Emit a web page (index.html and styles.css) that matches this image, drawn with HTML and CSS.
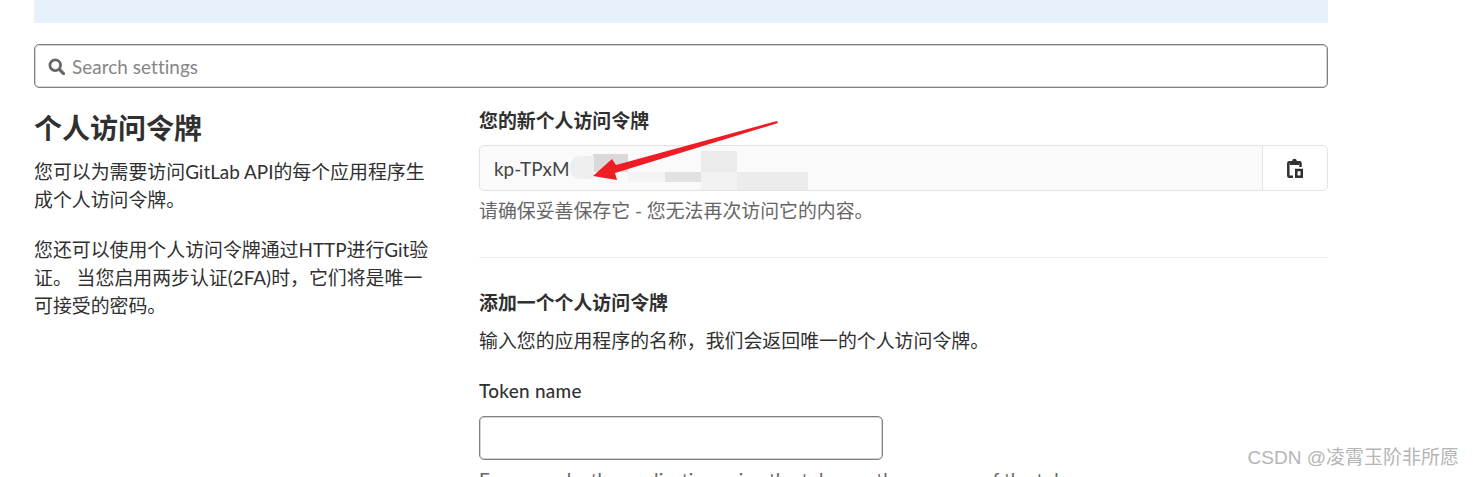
FILE: index.html
```html
<!DOCTYPE html>
<html lang="zh-CN">
<head>
<meta charset="utf-8">
<title>个人访问令牌</title>
<link rel="stylesheet" href="styles.css">
</head>
<body>
<div class="page">
  <div class="banner"></div>
  <div class="search">
    <svg class="search-icon" viewBox="0 0 16 16" width="17" height="17"><circle cx="6.800" cy="6.800" r="5" fill="none" stroke="#666" stroke-width="2.600"/><path d="M10.500 10.500 14.600 14.600" stroke="#666" stroke-width="3" stroke-linecap="round"/></svg>
    <span class="search-text">Search settings</span>
  </div>
  <div class="columns">
    <aside class="intro">
      <h1>个人访问令牌</h1>
      <p>您可以为需要访问GitLab API的每个应用程序生成个人访问令牌。</p>
      <p>您还可以使用个人访问令牌通过HTTP进行Git验证。 当您启用两步认证(2FA)时，它们将是唯一可接受的密码。</p>
    </aside>
    <main class="content">
      <h2>您的新个人访问令牌</h2>
      <div class="token">
        <div class="token-value">kp-TPxM
          <span class="blur b1"></span><span class="blur b2"></span><span class="blur b7"></span><span class="blur b3"></span><span class="blur b4"></span><span class="blur b5"></span><span class="blur b6"></span><span class="blur b8"></span>
        </div>
        <div class="copy">
          <svg viewBox="0 0 16 20" width="16" height="20"><path d="M3 4.200H2.300C1.700 4.200 1.300 4.600 1.300 5.200V17.700C1.300 18.300 1.700 18.700 2.300 18.700H6" fill="none" stroke="#303030" stroke-width="2.500"/><path d="M3 7V3H5.200C5.600 0 9.400 0 9.800 3H12V7Z" fill="#303030"/><path d="M12 4.200H12.500C13.100 4.200 13.500 4.600 13.500 5.200V9" fill="none" stroke="#303030" stroke-width="2.500"/><rect x="9.250" y="12" width="5.500" height="6.700" fill="none" stroke="#303030" stroke-width="2.500"/></svg>
        </div>
      </div>
      <p class="hint">请确保妥善保存它 - 您无法再次访问它的内容。</p>
      <hr>
      <h2>添加一个个人访问令牌</h2>
      <p class="desc">输入您的应用程序的名称，我们会返回唯一的个人访问令牌。</p>
      <label class="label">Token name</label>
      <div class="input"></div>
      <p class="help">For example, the application using the token or the purpose of the token.</p>
    </main>
  </div>
  <svg class="arrow" viewBox="0 0 192 65" width="192" height="65"><path d="M187 3 26 47 22 41 3 58 27 62 25 55 188 5Z" fill="#ee1c25"/></svg>
  <div class="watermark">CSDN @凌霄玉阶非所愿</div>
</div>
</body>
</html>
```

FILE: styles.css
```css
* { box-sizing: border-box; }
html, body { margin: 0; padding: 0; height: 477px; overflow: hidden; background: #fff; }
body { font-family: Lato, "Noto Sans CJK SC", sans-serif; font-size: 18.9px; line-height: 28px; color: #303030; }
.page { position: relative; height: 477px; overflow: hidden; padding: 0 146px 0 34px; }
.banner { height: 23px; background: #e6f1fb; }
.search { display: flex; align-items: center; height: 44px; margin-top: 21px; padding-left: 13px; border: 1px solid #808080; border-radius: 5px; box-shadow: inset 0 0 0 1px #d4d4d4; }
.search-icon { flex: none; margin-right: 7px; }
.search-text { padding-top: 2px; color: #868686; letter-spacing: .06px; }
.columns { display: flex; margin-top: 20px; }
.intro { width: 396px; margin-right: 49px; flex: none; }
.intro h1 { margin: 0 0 10px; font-size: 28px; line-height: 40px; font-weight: 700; }
.intro p { margin: 0 0 22px; }
.content { flex: 1; margin-top: -1px; }
.content h2 { margin: 0; font-size: 18.9px; line-height: 28px; font-weight: 700; }
.token { display: flex; height: 46px; margin-top: 10px; border: 1px solid #e3e3e3; border-radius: 5px; }
.token-value { position: relative; flex: 1; padding-left: 14px; line-height: 46px; background: #fafafa; border-right: 1px solid #e3e3e3; border-radius: 5px 0 0 5px; color: #444; }
.copy { display: flex; width: 64px; align-items: center; justify-content: center; }
.blur { position: absolute; background: #e4e4e4; }
.b1 { left: 113px; top: 8px; width: 35px; height: 18px; background: #d9d9d9; }
.b2 { left: 90px; top: 10px; width: 24px; height: 23px; background: #efefef; border-radius: 10px 0 0 10px; }
.b7 { left: 148px; top: 26px; width: 37px; height: 10px; background: #f4f4f4; }
.b3 { left: 185px; top: 26px; width: 36px; height: 10px; background: #e2e2e2; }
.b4 { left: 221px; top: 5px; width: 36px; height: 21px; background: #ebebeb; }
.b5 { left: 221px; top: 26px; width: 36px; height: 18px; background: #f2f2f2; }
.b6 { left: 257px; top: 26px; width: 35px; height: 18px; background: #ececec; }
.b8 { left: 292px; top: 26px; width: 36px; height: 18px; background: #ececec; }
.hint { margin: 6px 0 0; color: #666; }
hr { margin: 32px 0 31px; border: 0; border-top: 1px solid #eee; }
.desc { margin: 10px 0 0; }
.label { display: block; margin-top: 22px; font-weight: 500; letter-spacing: .3px; }
.input { width: 404px; height: 44px; margin-top: 11px; border: 1px solid #808080; border-radius: 5px; box-shadow: inset 0 0 0 1px #d4d4d4; }
.help { margin: 6px 0 0; color: #666; white-space: nowrap; letter-spacing: .11px; }
.arrow { position: absolute; left: 590px; top: 118px; }
.watermark { position: absolute; right: 15px; top: 444px; font-family: "Liberation Sans", "Noto Sans CJK SC", sans-serif; font-size: 19px; line-height: 28px; color: #b5b5b5; white-space: nowrap; }
```
